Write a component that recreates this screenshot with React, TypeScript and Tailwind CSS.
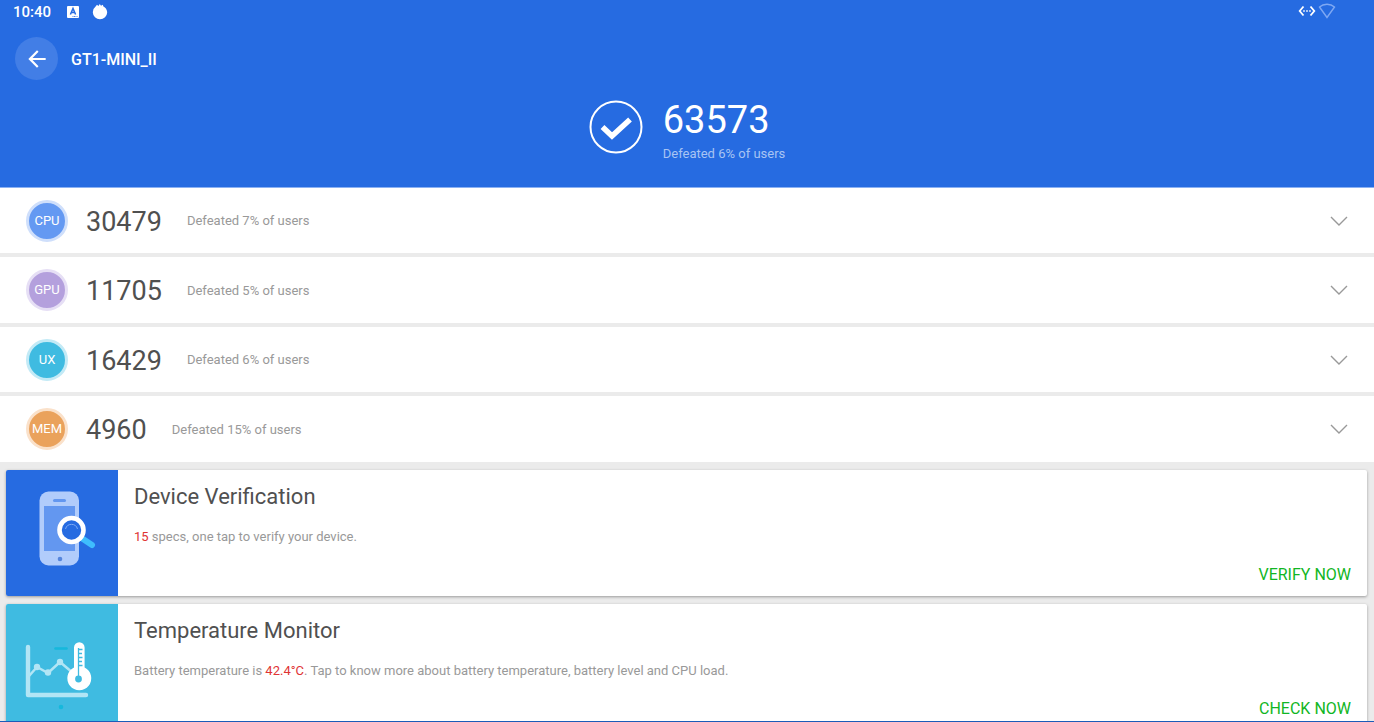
import type { ReactNode } from "react";
import { MdArrowBack } from "react-icons/md";

interface Score {
  label: string;
  value: string;
  note: string;
  badge: string;
}

interface ToolCardProps {
  title: string;
  action: string;
  panel: string;
  icon: ReactNode;
  children: ReactNode;
}

const scores: Score[] = [
  { label: "CPU", value: "30479", note: "Defeated 7% of users", badge: "bg-[#6499f2] border-[#cfdffb]" },
  { label: "GPU", value: "11705", note: "Defeated 5% of users", badge: "bg-[#b4a0dd] border-[#e6dff5]" },
  { label: "UX", value: "16429", note: "Defeated 6% of users", badge: "bg-[#3fbbe1] border-[#c3eaf6]" },
  { label: "MEM", value: "4960", note: "Defeated 15% of users", badge: "bg-[#eaa25c] border-[#fae1ca]" },
];

function StatusBar() {
  return (
    <div className="flex h-6 items-center justify-between pl-[13px] pr-[38px]">
      <div className="flex items-center">
        <span className="w-[54px] text-[15px] font-medium">10:40</span>
        <svg className="h-3 w-3" viewBox="0 0 12 12" aria-hidden="true">
          <rect width="12" height="12" rx="1" fill="#fff" />
          <path d="M3.4 8.5 6 2.5l2.6 6M4.4 6.6h3.2" fill="none" stroke="#266be1" strokeWidth="1.5" />
          <path d="M5.5 10.5h5" stroke="#266be1" strokeWidth="0.8" strokeDasharray="1 0.5" />
        </svg>
        <svg className="ml-[13px] h-4 w-4" viewBox="0 0 16 16" aria-hidden="true">
          <path
            d="M3.600 2.500 5 .8l1.400 1.300L7.800 0l1.200 1.800L10.800.8l.6 1.700A7.200 7.200 0 0 1 15.200 8.200 7.200 7.200 0 0 1 8 15.200 7.200 7.200 0 0 1 .8 8.200a7.200 7.200 0 0 1 2.800-5.700Z"
            fill="#fff"
          />
        </svg>
      </div>
      <div className="flex items-center gap-[2px] pb-[2px]">
        <svg className="h-3 w-[18px]" viewBox="0 0 18 12" fill="none" stroke="#fff" aria-hidden="true">
          <path d="M5.5 1.5 1.7 6l3.8 4.5M12.5 1.5 16.3 6l-3.8 4.5" strokeWidth="1.8" />
          <path d="M5.2 6h1.6M8.2 6h1.6M11.2 6h1.6" strokeWidth="1.6" />
        </svg>
        <svg className="h-4 w-[18px]" viewBox="0 0 18 16" fill="none" aria-hidden="true">
          <path d="M1.5 4C5.5.4 12.500.4 16.500 4L9 14.500Z" stroke="#7ea8f3" strokeWidth="1.4" />
        </svg>
      </div>
    </div>
  );
}

function ScoreRow({ label, value, note, badge }: Score) {
  return (
    <button type="button" className="flex w-full items-center bg-white pl-[26px] pr-[26px] text-left">
      <span
        className={`flex h-[42px] w-[42px] shrink-0 items-center justify-center rounded-full border-3 text-[13px] text-white ${badge}`}
      >
        {label}
      </span>
      <span className="ml-[18px] pt-[2px] text-[27px] leading-8 text-[#505050]">{value}</span>
      <span className="ml-[25px] flex-1 pt-px text-[13px] text-[#999]">{note}</span>
      <svg className="h-[10px] w-[18px]" viewBox="0 0 18 10" fill="none" stroke="#999" strokeWidth="1.4" aria-hidden="true">
        <path d="m1 1 8 8 8-8" />
      </svg>
    </button>
  );
}

function PhoneIcon() {
  return (
    <svg className="h-[126px] w-28" viewBox="0 0 112 126" aria-hidden="true">
      <rect x="33.500" y="21.500" width="39.500" height="74" rx="9" fill="#b1ccfb" />
      <rect x="38" y="36" width="31" height="45" fill="#6397f0" />
      <rect x="47" y="29" width="13" height="3" rx="1.500" fill="#6397f0" />
      <circle cx="54" cy="89" r="2.300" fill="#5585dc" />
      <path d="m77 69 9 6" stroke="#3fbdfd" strokeWidth="6" strokeLinecap="round" />
      <circle cx="65.500" cy="60" r="12" fill="#266be1" stroke="#fff" strokeWidth="4.600" />
      <path d="M59.500 59a6.200 6.200 0 0 1 12 0" fill="none" stroke="#7eaaf5" strokeWidth="1" />
    </svg>
  );
}

function ThermometerIcon() {
  return (
    <svg className="h-[126px] w-28" viewBox="0 0 112 126" fill="none" aria-hidden="true">
      <path d="M22 43v48h58" stroke="#b2e5f5" strokeWidth="4.400" strokeLinecap="round" strokeLinejoin="round" />
      <path d="m23 72 8-9 11 6 12-11 13 11" stroke="#b2e5f5" strokeWidth="2.500" />
      <g fill="#b2e5f5">
        <circle cx="31" cy="63" r="3.200" />
        <circle cx="42" cy="68.500" r="3.200" />
        <circle cx="54" cy="58" r="3.200" />
      </g>
      <path d="M49.500 44.500h11" stroke="#16b8dc" strokeWidth="2.600" strokeLinecap="round" />
      <circle cx="55" cy="103" r="2.300" fill="#16b8dc" />
      <path d="M68 43.500a5.300 5.300 0 0 1 10.600 0v20a12 12 0 1 1-10.600 0Z" fill="#fff" />
      <path d="M72.500 44v30M73 45.500h3.500M73 49.500h3M73 53.500h3.500M73 57.500h3M73 61.500h3.500" stroke="#3fbbe1" strokeWidth="1.300" />
      <circle cx="72.500" cy="75" r="3.400" fill="#3fbbe1" />
    </svg>
  );
}

function ToolCard({ title, action, panel, icon, children }: ToolCardProps) {
  return (
    <section className="flex shrink-0 overflow-hidden rounded-xs bg-white shadow-[0_1px_3px_rgba(0,0,0,0.35)]">
      <div className={`w-28 shrink-0 ${panel}`}>{icon}</div>
      <div className="flex flex-1 flex-col pb-[9px] pl-4 pr-4 pt-[13px]">
        <h2 className="text-[22px] leading-7 text-[#505050]">{title}</h2>
        <p className="mt-4 text-[13px] leading-5 text-[#999]">{children}</p>
        <button type="button" className="mt-auto self-end text-base text-[#11b624]">
          {action}
        </button>
      </div>
    </section>
  );
}

export default function App() {
  return (
    <div className="flex h-screen flex-col overflow-hidden border-b border-[#1c5bb8] bg-[#ebebeb] font-[Roboto,sans-serif]">
      <header className="h-[188px] shrink-0 border-b border-[#8bb1f3] bg-[#266be1] text-white">
        <StatusBar />
        <div className="mt-[13px] flex items-center gap-[13px] pl-[15px]">
          <button
            type="button"
            aria-label="Back"
            className="flex h-[43px] w-[43px] items-center justify-center rounded-full bg-[#427ee6]"
          >
            <MdArrowBack className="h-[26px] w-[26px]" />
          </button>
          <h1 className="pt-[2px] text-base font-medium">GT1-MINI_II</h1>
        </div>
        <div className="mt-5 flex items-start justify-center gap-5">
          <svg className="h-[54px] w-[54px]" viewBox="0 0 54 54" fill="none" stroke="#fff" aria-hidden="true">
            <circle cx="27" cy="27" r="25.500" strokeWidth="2" />
            <path d="m13.500 27 9.500 9L41 19.500" strokeWidth="5.500" />
          </svg>
          <div>
            <div className="text-[38px] leading-10">63573</div>
            <div className="mt-1 text-[13px] leading-5 text-[#a8c4f3]">Defeated 6% of users</div>
          </div>
        </div>
      </header>

      <div className="grid shrink-0 grid-rows-[65px_66px_65px_66px] gap-1">
        {scores.map((score) => (
          <ScoreRow key={score.label} {...score} />
        ))}
      </div>

      <main className="flex flex-col gap-2 pl-[6px] pr-[7px] pt-2">
        <ToolCard title="Device Verification" action="VERIFY NOW" panel="bg-[#266be1]" icon={<PhoneIcon />}>
          <span className="text-[#e03434]">15</span> specs, one tap to verify your device.
        </ToolCard>
        <ToolCard title="Temperature Monitor" action="CHECK NOW" panel="bg-[#3fbbe1]" icon={<ThermometerIcon />}>
          Battery temperature is <span className="text-[#e03434]">42.4°C</span>. Tap to know more about battery
          temperature, battery level and CPU load.
        </ToolCard>
      </main>
    </div>
  );
}
